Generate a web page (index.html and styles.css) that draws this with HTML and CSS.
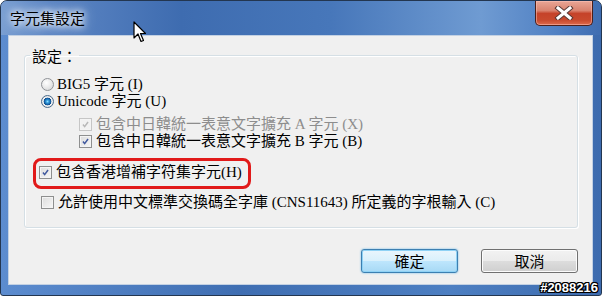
FILE: index.html
```html
<!DOCTYPE html>
<html lang="zh-Hant">
<head>
    <meta charset="UTF-8">
    <title>字元集設定</title>
    <link rel="stylesheet" href="styles.css">
</head>
<body>
    <div class="window">
        <div class="titlebar">
            <span class="title">字元集設定</span>
            <button class="close" aria-label="關閉">
                <svg width="20" height="14" viewBox="0 0 20 14">
                    <path d="M4 2 L16 12 M16 2 L4 12" stroke="#5a3a36" stroke-width="5" stroke-linecap="square"/>
                    <path d="M4 2 L16 12 M16 2 L4 12" stroke="#fff" stroke-width="3" stroke-linecap="square"/>
                </svg>
            </button>
        </div>

        <div class="client">
            <fieldset class="group">
                <legend>設定：</legend>
                <div class="options">
                    <div class="row"><span class="radio"></span>BIG5 字元 (I)</div>
                    <div class="row"><span class="radio on"></span>Unicode 字元 (U)</div>

                    <div class="sub">
                        <div class="row disabled">
                            <span class="check"><svg viewBox="0 0 13 13"><path d="M3.5 6.5 L5.5 9 L9.5 3.5" /></svg></span>
                            包含中日韓統一表意文字擴充 A 字元 (X)
                        </div>
                        <div class="row">
                            <span class="check"><svg viewBox="0 0 13 13"><path d="M3.5 6.5 L5.5 9 L9.5 3.5" /></svg></span>
                            包含中日韓統一表意文字擴充 B 字元 (B)
                        </div>
                    </div>

                    <div class="mark">
                        <div class="row">
                            <span class="check"><svg viewBox="0 0 13 13"><path d="M3.5 6.5 L5.5 9 L9.5 3.5" /></svg></span>
                            包含香港增補字符集字元(H)
                        </div>
                    </div>

                    <div class="row last">
                        <span class="check"></span>
                        允許使用中文標準交換碼全字庫 (CNS11643) 所定義的字根輸入 (C)
                    </div>
                </div>
            </fieldset>

            <div class="buttons">
                <button class="btn default">確定</button>
                <button class="btn">取消</button>
            </div>
        </div>

        <!-- mouse pointer over the title bar -->
        <svg class="cursor" width="14" height="22" viewBox="0 0 14 22">
            <path d="M1 1 L1 17 L5 13 L8 20.5 L10.5 19.5 L7.5 12.5 L12.5 12.5 Z" fill="#fff" stroke="#000" stroke-width="1.2" stroke-linejoin="round"/>
        </svg>

        <span class="stamp">#2088216</span>
    </div>
</body>
</html>
```

FILE: styles.css
```css
/* Page */
body {
    margin: 0;
    background: #fff;
    font-family: "Liberation Serif", "Noto Sans CJK TC", serif;
}

/* Window frame */
.window {
    position: relative;
    width: 602px;
    height: 296px;
    box-sizing: border-box;
    border: 1px solid #233650;
    border-radius: 7px 7px 3px 3px;
    padding: 0 8px 10px 7px;
    display: flex;
    flex-direction: column;
    background: linear-gradient(to right, #5c8ccf, #3f6eb2 40%, #4d7fc2 75%, #3d6bae);
    overflow: hidden;
}

.titlebar {
    height: 34px;
    margin: 0 -8px 0 -7px;
    padding: 0 8px 0 9px;
    display: flex;
    align-items: flex-start;
    background: linear-gradient(to right, #7a9fd2 0%, #5d86c4 8%, #3e6cb0 30%, #4777ba 55%, #6f9bd2 80%, #5282c4 92%, #3f6db1 100%);
}

.title {
    align-self: center;
    font-family: "Noto Sans CJK TC", sans-serif;
    font-size: 15px;
    line-height: 18px;
    color: #000;
    text-shadow: 0 0 6px #fff, 0 0 10px #fff, 0 0 14px #dfe9f6;
}

.close {
    margin-left: auto;
    width: 58px;
    height: 25px;
    padding: 0;
    display: flex;
    align-items: center;
    justify-content: center;
    border: 1px solid #4b1f1a;
    border-top: none;
    border-radius: 0 0 5px 5px;
    background: linear-gradient(to bottom, #e9a696 0%, #d9836f 40%, #c5432a 52%, #c84a2e 80%, #dc6a4c 100%);
    box-shadow: inset 0 0 0 1px rgba(255, 200, 190, 0.5);
}

/* Client area */
.client {
    flex: 1;
    box-sizing: border-box;
    border: 1px solid #c3d1e3;
    background: #f0f0f0;
    display: flex;
    flex-direction: column;
    font-size: 15px;
    color: #000;
}

.group {
    margin: 11px 14px 0 15px;
    padding: 0 0 16px 0;
    border: 1px solid #d5dfe5;
    border-radius: 3px;
    box-shadow: inset 1px 1px 0 #fff, 1px 1px 0 #fff;
}

.group legend {
    margin-left: 5px;
    padding: 0 2px;
    font-family: "Noto Sans CJK TC", sans-serif;
    line-height: 17px;
}

.options {
    padding: 12px 0 0 16px;
}

.row {
    display: flex;
    align-items: center;
    height: 17px;
    line-height: 17px;
    white-space: nowrap;
    gap: 3px;
}

.row.disabled {
    color: #8d8d8d;
}

.sub {
    margin: 6px 0 0 38px;
}

.sub .row {
    gap: 4px;
}

.mark {
    width: 218px;
    box-sizing: border-box;
    margin: 8px 0 0 -8px;
    padding: 3px 0 5px 3px;
    border: 3px solid #e11a1a;
    border-radius: 8px;
}

.mark .row,
.row.last {
    gap: 4px;
}

.row.last {
    margin-top: 5px;
}

/* Radio buttons */
.radio {
    width: 13px;
    height: 13px;
    box-sizing: border-box;
    border-radius: 50%;
    border: 1px solid #8f9297;
    background: radial-gradient(circle at 40% 35%, #ffffff 0, #f0f0f0 35%, #cfd0d2 100%);
    flex-shrink: 0;
}

.radio.on {
    border-color: #4c6c8c;
    background: radial-gradient(circle at 50% 50%, #8fe0ff 0, #2d95d8 1.6px, #0d4c8e 3.6px, #f6f6f6 4.2px, #dadada 6px);
}

/* Check boxes */
.check {
    width: 13px;
    height: 13px;
    box-sizing: border-box;
    border: 1px solid #8e8f8f;
    background: linear-gradient(135deg, #dcdcdc, #f7f7f7);
    box-shadow: inset 0 0 0 1px #f4f4f4;
    flex-shrink: 0;
    display: flex;
}

.check svg {
    width: 11px;
    height: 11px;
}

.check path {
    fill: none;
    stroke: #41599e;
    stroke-width: 1.8;
}

.disabled .check {
    border-color: #c6c6c6;
    background: #f2f2f2;
}

.disabled .check path {
    stroke: #b8b8b8;
}

/* Dialog buttons */
.buttons {
    margin-top: 21px;
    padding-right: 14px;
    display: flex;
    justify-content: flex-end;
    gap: 23px;
}

.btn {
    width: 97px;
    height: 24px;
    padding: 0;
    border: 1px solid #707070;
    border-radius: 3px;
    font-family: "Noto Sans CJK TC", sans-serif;
    font-size: 15px;
    line-height: 20px;
    color: #000;
    background: linear-gradient(to bottom, #f2f2f2 0%, #ebebeb 49%, #dddddd 50%, #cfcfcf 100%);
    box-shadow: inset 0 0 0 1px #fcfcfc;
}

.btn.default {
    border-color: #3c7fb1;
    background: linear-gradient(to bottom, #eaf6fd 0%, #d9f0fc 49%, #bee6fd 50%, #a7d9f5 100%);
    box-shadow: inset 0 0 0 1px #8fd2f5, 0 0 2px #5bb4e6;
}

/* Overlays */
.cursor {
    position: absolute;
    left: 132px;
    top: 20px;
}

.stamp {
    position: absolute;
    right: 3px;
    bottom: 0;
    font-family: "Liberation Sans", sans-serif;
    font-weight: bold;
    font-size: 13px;
    line-height: 14px;
    color: #fff;
    text-shadow: 1px 0 0 #000, -1px 0 0 #000, 0 1px 0 #000, 0 -1px 0 #000,
                 1px 1px 0 #000, -1px -1px 0 #000, 1px -1px 0 #000, -1px 1px 0 #000;
}
```
